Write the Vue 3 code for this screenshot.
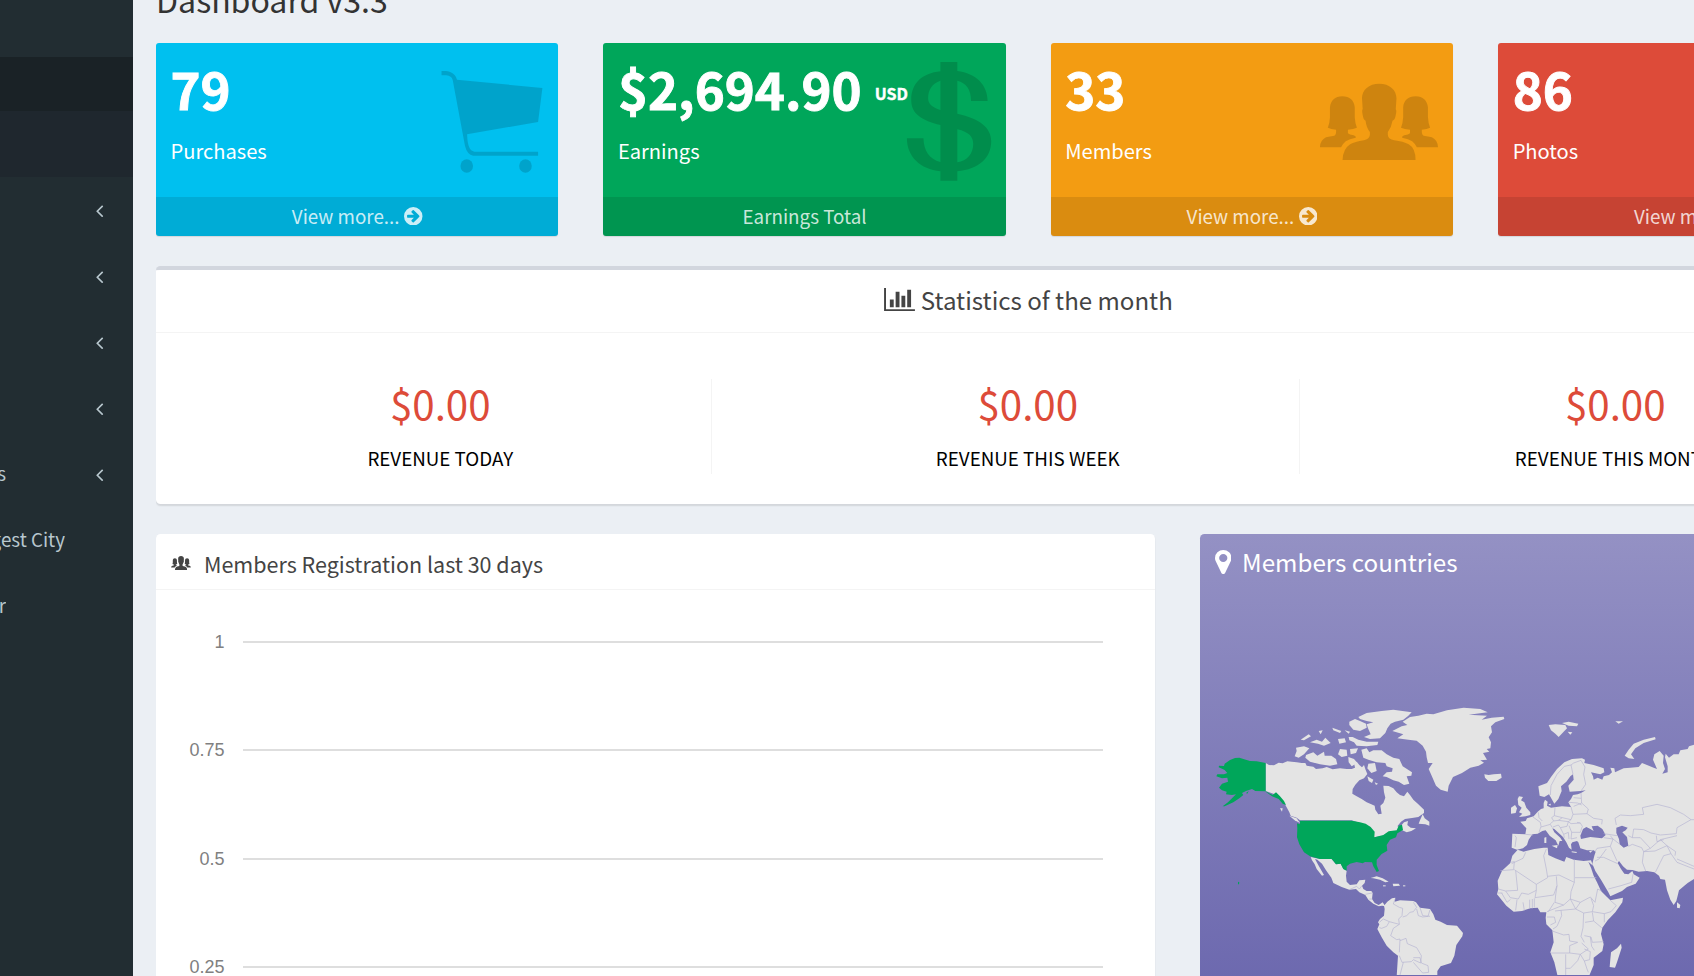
<script setup>
const menu = [
  { text: '', w: 6, arrow: true },
  { text: '', w: 6, arrow: true },
  { text: '', w: 6, arrow: true },
  { text: '', w: 6, arrow: true },
  { text: 's', w: 6, arrow: true },
  { text: 'gest City', w: 65, arrow: false },
  { text: 'r', w: 6, arrow: false },
]

const cards = [
  { tone: 'aqua', value: '79', unit: '', label: 'Purchases', foot: 'View more...', link: true, icon: 'cart' },
  { tone: 'green', value: '$2,694.90', unit: 'USD', label: 'Earnings', foot: 'Earnings Total', link: false, icon: 'usd' },
  { tone: 'yellow', value: '33', unit: '', label: 'Members', foot: 'View more...', link: true, icon: 'people' },
  { tone: 'red', value: '86', unit: '', label: 'Photos', foot: 'View more...', link: true, icon: '' },
]

const revenue = [
  { amount: '$0.00', label: 'REVENUE TODAY' },
  { amount: '$0.00', label: 'REVENUE THIS WEEK' },
  { amount: '$0.00', label: 'REVENUE THIS MONTH' },
]

const ticks = ['1', '0.75', '0.5', '0.25']

const man = 'M693 251C722 251 741 270 741 295L739 328Q742 332 739 345Q737 360 730 362Q727 382 717 396V405Q718 418 735 421Q760 424 775 433Q794 445 794 480H591Q592 447 612 433Q625 425 650 421Q665 418 667 405V396Q657 382 655 362Q649 360 647 345Q644 330 647 328L645 295C645 270 664 251 693 251Z'
const woman = 'M590 289C612 289 623 302 625 322V352Q626 372 631 383Q622 388 606 389V400Q610 405 622 406Q629 408 628 413Q610 416 600 424Q592 431 587 442H528Q529 420 545 412Q555 409 568 407Q574 404 573 389Q558 388 550 383Q555 372 556 352V322C558 302 570 289 590 289Z'

const americas = [
  // Canada
  'M197 222L207 228L222 229L236 221L248 223L262 217L275 218L290 220L305 222L316 222L320 230L340 233L348 240L368 238L380 234L398 241L420 238L440 240L455 240L465 236L462 222L470 218L478 228L486 235L492 228L497 243L502 255L492 268L478 274L466 287L458 300L457 314L470 322L485 330L500 340L514 346L524 350L526 362L535 376L545 374L541 350L550 342L556 326L552 310L550 290L566 291L580 298L590 310L600 318L612 322L622 308L630 318L640 332L655 346L672 362L672 372L655 384L636 387L615 390L603 398L592 412L600 414L612 400L624 396L622 408L632 416L648 418L634 426L620 430L607 424L550 440L523 445L480 402L455 394H300L290 386L272 380L268 370L255 346L245 332L232 316L220 314L197 306Z',
  // Arctic islands
  'M475 84L500 72L545 66L580 62L635 70L625 80L610 92L585 98L572 104L562 118L556 132L540 148L510 150L492 144L512 136L505 120L500 106L520 100L500 96L480 90Z',
  'M448 98L465 90L480 96L498 104L500 116L480 126L460 122L448 108Z',
  'M446 144L458 144L475 152L500 158L535 158L532 168L500 172L470 170L462 160L448 154Z',
  'M484 182L500 178L508 190L520 184L545 184L560 196L580 206L598 210L608 232L636 250L634 260L620 262L628 284L612 288L596 278L580 274L560 264L548 262L560 250L576 248L578 238L560 232L556 222L530 220L505 212L490 206Z',
  'M505 224L525 222L530 246L514 252L502 238Z', 'M502 262L520 272L516 282L506 276Z', 'M524 280L534 284L528 288Z',
  'M318 198L340 190L352 200L372 188L374 200L394 200L408 210L412 226L390 230L360 226L330 218L316 206Z',
  'M288 176L312 172L328 178L312 196L296 206L284 202L290 186Z',
  'M302 152L326 136L333 142L312 154Z', 'M330 160L350 152L366 158L376 146L392 162L372 170L354 164Z',
  'M356 126L368 124L362 136Z', 'M397 116L424 126L420 132L400 124Z', 'M414 150L434 148L438 160L418 164Z',
  'M434 124L450 128L446 134Z', 'M420 180L440 182L442 200L425 204L414 196Z', 'M450 180L474 178L468 192L452 196Z',
  'M445 204L462 210L472 222L455 232L446 220Z',
  'M668 376L674 388L688 398L688 410L676 406L656 404L660 394Z',
  'M268 380L290 388L300 402L284 394Z', 'M240 358L248 358L246 368Z',
  // Greenland
  'M577 126L605 112L622 108L608 98L630 84L655 80L680 74L700 76L741 64L791 56L841 60L863 70L806 77L861 80L845 92L875 86L911 83L913 90L886 100L873 112L876 130L866 145L873 160L871 178L860 180L868 188L849 192L861 212L841 214L852 221L836 230L811 236L786 252L759 264L746 290L743 308L722 302L708 290L695 260L686 240L698 222L684 222L680 205L678 188L668 170L650 155L625 152L592 148L610 136Z',
  // Mexico and Central America
  'M332 504L360 510H395L408 526L422 524L430 540L440 545L438 560L440 578L450 588L470 586L478 574L496 572L494 582L486 590L490 600L500 606L514 606L518 612L516 630L524 642L536 648L548 640L556 652L546 650L536 652L520 644L505 632L496 618L478 610L468 600L448 602L425 594L400 582L394 566L378 544L366 524L352 512L345 510L356 530L372 558L366 560L350 540L344 526L336 514Z',
  'M512 567L530 562L548 568L566 578L556 580L540 572L520 568Z', 'M578 584L596 584L600 590L580 592Z', 'M609 589H616V592H609Z', 'M549 589H557V592H549Z',
  // South America
  'M552 650L562 638L576 628L586 626L584 638L600 634L640 636L648 640L660 656L690 660L700 676L706 692L722 698L741 708L771 710L789 732L787 742L769 768L763 800L753 822L741 826L722 832L712 846V862H590L594 800L580 790L560 770L545 745L532 720L538 706L534 700L540 690L552 680L554 660Z',
]

const usa = [
  'M300 395H455L480 400L497 404L512 414L524 428L523 445L550 438L566 427L590 424L596 410L606 407L609 423L592 433L588 445L570 452L560 468L562 485L545 495L530 512L530 528L537 546L530 549L520 532L516 520L495 519L488 523L470 519L450 524L440 532V545L430 540L422 524L408 526L395 510H360L330 502L312 490L298 466L291 445L292 418L291 403L300 406Z',
  'M197 222L170 217L150 216L118 206L105 207L90 213L74 224L72 231L57 230L56 235L74 243L82 252L72 256L52 256L49 262L66 268L82 266L84 278L66 284L57 296L66 304L80 308L78 316L96 318L108 316L96 328L84 340L68 352L74 352L100 340L118 328L130 318L126 312L138 306L156 300L166 306L197 307L218 318L228 310L240 322L252 336L258 348L248 344L236 330L216 322L197 308Z',
  'M138 312L146 306L142 314Z', 'M114 578L118 580L117 586L114 586Z',
]

const oldWorld = [
  'M112 256L125 258L140 256L162 254L164 266L148 276L124 276L114 266Z',
  'M305 108L325 106L355 108L360 118L350 128L335 144L325 134L312 124Z', 'M345 102L365 98L394 104L390 112L365 110Z',
  'M362 128L376 130L370 137Z', 'M505 97L528 97L515 104Z',
  'M533 200L545 182L560 164L590 152L624 144L626 151L590 162L565 178L552 196L562 210L545 208Z',
  'M212 330L216 322L228 324L222 334L232 340L238 356L250 370L250 378L236 382L216 384L226 374L216 370L224 356L214 348Z',
  'M192 356L204 348L210 358L206 372L192 374Z',
  // Eurasia, with the Black and Caspian seas cut out
  'M274 292L300 282L312 264L330 240L352 220L375 210L405 208L414 212L412 222L440 228L470 238L472 250L460 256L432 250L438 262L440 272L452 266L466 272L470 262L486 258L495 250L490 236L502 238L504 250L512 246L530 238L550 236L575 234L585 222L600 228L620 236L630 240L618 212L622 196L638 186L650 200L648 222L654 240L646 254L662 250L662 232L654 205L656 194L666 206L680 196L695 196L700 184L722 180L726 172L760 162V565L741 570L722 582L712 590L696 604L692 620L688 636L680 648L670 632L660 604L654 572L640 570L636 560L622 550L600 546L575 548L556 543L540 542L528 532L516 516L512 522L522 540L532 554L544 556L556 546L560 556L578 566L566 584L540 594L525 606L490 622L484 610L462 572L445 546L436 524L442 500L446 488L440 484L420 484L400 478L394 460L390 456L376 460L372 466L374 482L366 476L358 460L348 444L335 432L322 420L316 418L322 430L340 446L346 456L338 456L334 470L326 454L308 440L296 424L286 426L272 434L256 436L245 452L240 468L228 478L210 482L194 476L196 434L235 436L238 418L220 398L236 396L240 388L260 382L272 368L282 360L290 358V342L294 332L302 338L300 350L312 356L345 352L372 354L364 340L372 330L378 318L392 316L402 312L416 304L400 306L368 308L364 290L380 272L378 256L370 262L358 278L342 292L344 306L334 330L322 344L314 330L306 316L292 324L278 320ZM400 440L408 420L418 414L430 420L440 426L434 412L452 410L466 420L476 438L465 448L430 444L402 450ZM508 416L525 410L542 416L536 424L526 430L540 444L544 470L530 476L518 466L516 450L508 432Z',
  'M292 446L298 444L298 462L292 462Z', 'M314 470L332 468L330 478Z', 'M374 487L390 489L388 492L374 490Z', 'M426 487L438 484L430 491Z', 'M304 346L312 344L310 350Z',
  'M690 640L700 648L698 658L690 656Z',
  // Africa
  'M212 482L230 488L262 480L290 476L302 476L304 498L325 508L352 518L358 504L380 512L410 516L432 514L438 530L424 518L432 536L440 560L450 580L462 606L480 624L490 634L528 626L526 640L505 670L482 694L466 716L462 735L470 766L466 786L440 806L440 828L426 862H332L322 820L310 790L320 760L316 724L298 706L296 686L298 670L280 670L272 656L250 658L225 666L200 668L178 650L150 616L154 600L152 575L165 545L190 522L196 500Z',
  'M522 764L524 776L510 820L504 836L488 834L490 810L492 790L510 778Z',
]

const bordersWest = 'M585 630L580 645L598 655L608 658L606 680L596 690L598 706L568 698L550 690L538 700M640 640L650 655L640 668L630 670L620 680L608 684M660 656L668 680L690 682M690 662L684 682L668 684L655 680L650 660M568 698L560 712L545 718L538 716M598 706L580 718L572 740L590 752L600 750L598 790M600 755L618 748L622 764L650 776L664 800L662 822L640 812L634 818L606 820L598 800M640 806L660 806L664 822L684 830L686 850L668 852L640 820M600 858L610 820M448 602L470 592L478 600L486 590M496 616L516 612M508 630L518 630'

const bordersEast = [
  'M160 545L200 542L202 518L190 520M194 524L228 508L236 490M202 542L268 586L302 566L298 540L290 500L298 480M302 562L336 558L382 580V512M384 566H448M206 545L212 604L176 606L154 600M268 586V604L244 616L224 612L214 630L190 626L176 606M268 604L264 626L320 618L330 590L328 562M330 590L326 618L324 640L350 648L370 630L372 608L382 580M370 630L400 640L430 624L444 640L452 600L464 606M350 648L330 656L300 668M322 640L304 668M324 666L342 664L344 680L330 712L318 720M300 684L322 684L326 700L310 708M342 664L386 660L410 672L408 716L402 742L412 760M386 660L400 640M370 630L386 660M410 672L436 668L440 650L432 628M436 670L440 696L414 700M440 696L464 716M436 668L472 674V700M472 674L492 668L508 650L490 634M316 726L350 738L366 736L368 756L392 760L368 770V792H312M368 792L400 796L424 780L404 762M412 740L432 744L436 760L470 758M400 796L392 815L370 838H356V796M400 796L412 816L428 812L430 788L412 780M412 816L420 840L424 850M256 630V658M262 628V656M248 632V658M228 640L232 664M210 632L206 664M164 612L180 640L190 632M152 612H166M356 838V858M430 744L434 772L442 784',
  'M204 440L208 446L204 474M235 436L258 438M258 384L280 400L282 412L276 430M274 370L276 386L286 396M282 414L310 406L316 416M324 356L322 380L314 386L320 396L310 404M372 354L378 376L372 392L346 386L322 380M346 386L334 394L320 396M334 394L364 398L372 392M364 398L360 412L340 416L334 408L318 414M340 416L350 436L364 430L366 450M350 436L352 446M364 398L372 404L400 402L406 412L400 430L374 430L366 410M374 430L372 450L390 446M378 376L420 374L424 360L404 342L380 352M366 340L392 342L404 348M380 326L402 328M402 312L404 342M420 374L440 388L466 392L464 406M400 402L390 400',
  'M310 318L312 290L330 256L352 232L372 228L378 256M372 228L380 222L402 214L414 234L410 256L416 286L402 306',
  'M508 408L504 388L520 378L550 380L590 376L586 356L630 346L670 356L710 376L732 392L741 392M732 392L690 416L688 434L640 438L612 432L590 422L560 420L556 446L544 440M556 446L580 446L610 478L590 488L584 476L556 466L544 472M590 488L586 520L596 546M590 488L624 486L660 470L640 452L610 478M640 452L690 440M628 440L630 458L650 452M660 470L672 494L650 500L640 520L625 550M672 494L690 520L741 540M690 510L741 532M444 488L450 478L490 472L498 450L470 446M490 472L510 516M450 505L470 505L512 524M444 516L456 510L478 480M498 450L516 464M470 434L510 440M484 600L522 590L554 580L558 556M498 450L490 440M660 470L686 488L684 500',
].join('')
</script>

<template>
  <div class="page">
    <aside class="sidebar">
      <div class="side-head"></div>
      <div class="side-active"></div>
      <div v-for="(m, i) in menu" :key="i" class="side-row">
        <span class="side-text" :style="{ width: m.w + 'px' }">{{ m.text }}</span>
        <svg v-if="m.arrow" class="angle" viewBox="0 0 1792 1792"><path d="M1203 544q0 13-10 23l-393 393 393 393q10 10 10 23t-10 23l-50 50q-10 10-23 10t-23-10l-466-466q-10-10-10-23t10-23l466-466q10-10 23-10t23 10l50 50q10 10 10 23z" /></svg>
      </div>
    </aside>

    <main class="content">
      <h1>Dashboard v3.3</h1>

      <section class="cards">
        <article v-for="c in cards" :key="c.label" class="card" :class="c.tone">
          <div class="card-inner">
            <h3>{{ c.value }}<sup v-if="c.unit">{{ c.unit }}</sup></h3>
            <p>{{ c.label }}</p>
          </div>
          <svg v-if="c.icon === 'cart'" class="pic cart" viewBox="1220 180 300 370" preserveAspectRatio="none">
            <path d="M1227 213H1240Q1256 215 1264 226Q1268 231 1270 239L1507 264L1495 366L1298 403Q1299 432 1304 442Q1308 453 1318 455H1495V467H1315Q1298 464 1292 437L1258 240Q1255 228 1240 226H1227Z" />
            <ellipse cx="1297" cy="498" rx="17.5" ry="20" /><ellipse cx="1460" cy="498" rx="17.5" ry="20" />
          </svg>
          <svg v-if="c.icon === 'usd'" class="pic usd" viewBox="940 180 250 370" preserveAspectRatio="none">
            <path fill-rule="evenodd" d="M1041 186H1088V213C1140 220 1172 255 1172 303H1126C1126 268 1112 248 1088 242V341C1150 356 1182 382 1182 424C1182 474 1148 508 1088 514V542H1041V514C985 508 948 470 948 415H994C995 452 1010 478 1041 486V375C990 362 960 342 960 300C960 250 990 220 1041 214ZM1041 242C1018 250 1007 270 1007 294C1007 312 1018 322 1041 330ZM1088 388V487C1115 482 1132 462 1132 432C1132 410 1120 396 1088 388Z" />
          </svg>
          <svg v-if="c.icon === 'people'" class="pic people" viewBox="520 240 345 250" preserveAspectRatio="none">
            <path :d="man" /><path :d="woman" /><path :d="woman" transform="matrix(-1 0 0 1 1384.5 0)" />
          </svg>
          <div class="card-foot">
            <span>{{ c.foot }}</span>
            <svg v-if="c.link" viewBox="128 128 1536 1536"><path fill-rule="evenodd" d="M1413 896q0-27-18-45l-91-91-362-362q-18-18-45-18t-45 18l-91 91q-18 18-18 45t18 45l189 189h-502q-26 0-45 19t-19 45v128q0 26 19 45t45 19h502l-189 189q-19 19-19 45t19 45l91 91q18 18 45 18t45-18l362-362 91-91q18-18 18-45zM896 128A768 768 0 1 1 896 1664A768 768 0 1 1 896 128Z" /></svg>
          </div>
        </article>
      </section>

      <section class="stats">
        <header>
          <svg viewBox="0 0 2048 1792"><path d="M640 896v512h-256v-512h256zm384-512v1024h-256v-1024h256zm1024 1152v128h-2048v-1536h128v1408h1920zm-640-896v768h-256v-768h256zm384-384v1152h-256v-1152h256z" /></svg>
          <span>Statistics of the month</span>
        </header>
        <div class="stats-body">
          <div v-for="r in revenue" :key="r.label" class="block">
            <div class="amount">{{ r.amount }}</div>
            <div class="caption">{{ r.label }}</div>
          </div>
        </div>
      </section>

      <section class="lower">
        <div class="chart-box">
          <header>
            <svg viewBox="526 250 333 232" preserveAspectRatio="none"><path :d="man" /><path :d="woman" /><path :d="woman" transform="matrix(-1 0 0 1 1384.5 0)" /></svg>
            <span>Members Registration last 30 days</span>
          </header>
          <div class="chart">
            <div v-for="t in ticks" :key="t" class="tick"><span>{{ t }}</span><i></i></div>
          </div>
        </div>

        <div class="map-box">
          <header>
            <svg viewBox="384 128 1024 1536" preserveAspectRatio="none"><path d="M1152 640q0-106-75-181t-181-75-181 75-75 181 75 181 181 75 181-75 75-181zm256 0q0 109-33 179l-364 774q-16 33-47.500 52t-67.500 19-67.500-19-46.500-52l-365-774q-33-70-33-179 0-212 150-362t362-150 362 150 150 362z" /></svg>
            <span>Members countries</span>
          </header>
          <svg class="map" viewBox="0 0 1482 858">
            <g class="land"><path v-for="(d, i) in americas" :key="i" :d="d" /></g>
            <g class="usa"><path v-for="(d, i) in usa" :key="i" :d="d" /></g>
            <path class="border" :d="bordersWest" />
            <g transform="translate(741 0)">
              <g class="land"><path v-for="(d, i) in oldWorld" :key="i" :d="d" fill-rule="evenodd" /></g>
              <path class="border" :d="bordersEast" />
            </g>
          </svg>
        </div>
      </section>
    </main>
  </div>
</template>

<style>
html, body { margin: 0; overflow: hidden; }
</style>

<style scoped>
.page { display: flex; width: 1694px; height: 976px; overflow: hidden; background: #ebeff4; font-family: "Noto Sans CJK SC", "Noto Sans CJK JP", sans-serif; color: #333; }
.page * { box-sizing: border-box; }

.sidebar { flex: none; width: 133px; height: 976px; padding-top: 57px; background: #222d32; }
.side-head { height: 54px; background: #1a2226; }
.side-active { height: 66px; background: #1f272e; }
.side-row { display: flex; align-items: center; justify-content: space-between; height: 66px; padding-right: 23px; color: #b8c7ce; font-size: 18.8px; line-height: 28px; }
.side-text { display: flex; justify-content: flex-end; height: 30px; overflow: hidden; white-space: nowrap; }
.angle { width: 21px; height: 21px; fill: #b8c7ce; }

.content { flex: none; width: 1767.5px; height: 976px; margin-left: 23px; overflow: hidden; padding-right: 23px; }
h1 { margin: -19px 0 26.3px; height: 36px; font-size: 32.1px; line-height: 36px; font-weight: 400; }

.cards { display: grid; grid-template-columns: repeat(4, 1fr); gap: 45px; }
.card { position: relative; height: 193.2px; border-radius: 3px; box-shadow: 0 1px 1px rgba(0,0,0,.1); color: #fff; overflow: hidden; }
.aqua { background: #00c0ef; }
.green { background: #00a65a; }
.yellow { background: #f39c12; }
.red { background: #dd4b39; }
.card-inner { height: 153.7px; padding: 17px 15px 0 14.5px; white-space: nowrap; }
h3 { margin: 0; height: 57px; font-size: 51px; line-height: 57px; font-weight: 700; display: flex; -webkit-text-stroke: 0.9px #fff; }
sup { margin-left: 13px; font-size: 16px; line-height: 57px; height: 57px; position: relative; top: 5px; -webkit-text-stroke: 0.4px #fff; }
p { margin: 18px 0 0; font-size: 20.1px; line-height: 32px; }
.card-foot { display: flex; align-items: center; justify-content: center; gap: 4.5px; height: 39.5px; padding-bottom: 1px; background: rgba(0,0,0,.1); color: rgba(255,255,255,.8); font-size: 18.8px; line-height: 30px; }
.card-foot svg { width: 18.5px; height: 18.5px; fill: currentColor; }
.pic { position: absolute; fill: rgba(0,0,0,.15); }
.cart { left: 283.1px; top: 17px; width: 108.1px; height: 123.3px; }
.usd { left: 301px; top: 17px; width: 90.1px; height: 123.3px; }
.people { left: 266.5px; top: 36.8px; width: 124.1px; height: 83.3px; }

.stats { height: 238.5px; margin-top: 29.5px; background: #fff; border-top: 4.5px solid #d2d6de; border-radius: 4.5px; box-shadow: 0 1.5px 1.5px rgba(0,0,0,.1); }
.stats header { display: flex; align-items: center; justify-content: center; gap: 6px; height: 63.5px; padding-bottom: 3px; border-bottom: 1.5px solid #f4f4f4; font-size: 24.1px; color: #444; }
.stats header span { line-height: 36px; }
.stats header svg { width: 31px; height: 27px; fill: #444; }
.stats-body { display: grid; grid-template-columns: repeat(3, 1fr); gap: 45px; padding: 46px 13.5px 0; }
.block { height: 94.5px; border-right: 1px solid #f4f4f4; text-align: center; white-space: nowrap; }
.block:last-child { border-right-color: transparent; }
.amount { height: 50px; line-height: 48px; font-size: 40.3px; color: #dd4b39; }
.caption { margin-top: 14px; line-height: 30px; font-size: 18.8px; color: #000; }

.lower { display: flex; gap: 45px; margin-top: 29.5px; }
.chart-box { width: 999px; height: 600px; background: #fff; border-radius: 4.5px; box-shadow: 0 1.5px 1.5px rgba(0,0,0,.1); }
.chart-box header { display: flex; align-items: center; gap: 13px; height: 56.5px; padding: 5px 15px 0; border-bottom: 1.5px solid #f4f4f4; font-size: 21.5px; color: #444; }
.chart-box header span { line-height: 32px; }
.chart-box header svg { width: 20px; height: 14px; fill: #444; margin-top: -3px; }
.chart { padding: 36.5px 52.5px 0 14.5px; }
.tick { display: flex; align-items: center; height: 30px; margin-bottom: 78.5px; }
.tick span { width: 54px; margin-right: 18px; text-align: right; color: #808080; font: 18px/20px "Liberation Sans", Arial, sans-serif; }
.tick i { flex: 1; height: 2px; background: #dedede; }

.map-box { flex: none; width: 700px; height: 590px; border-radius: 4.5px; background: linear-gradient(#9491c4, #605ca8); color: #fff; }
.map-box header { display: flex; align-items: flex-start; gap: 11px; height: 56px; padding: 11px 14.5px 0; font-size: 24.2px; }
.map-box header span { line-height: 34px; }
.map-box header svg { width: 16.5px; height: 24px; margin-top: 5.5px; fill: #fff; }
.map { display: block; width: 494px; height: 286px; margin-top: 99.5px; }
.land { fill: #e4e4e4; }
.usa { fill: #00a65a; }
.border { fill: none; stroke: #b5b3d1; stroke-width: 2; stroke-linejoin: round; }
</style>
